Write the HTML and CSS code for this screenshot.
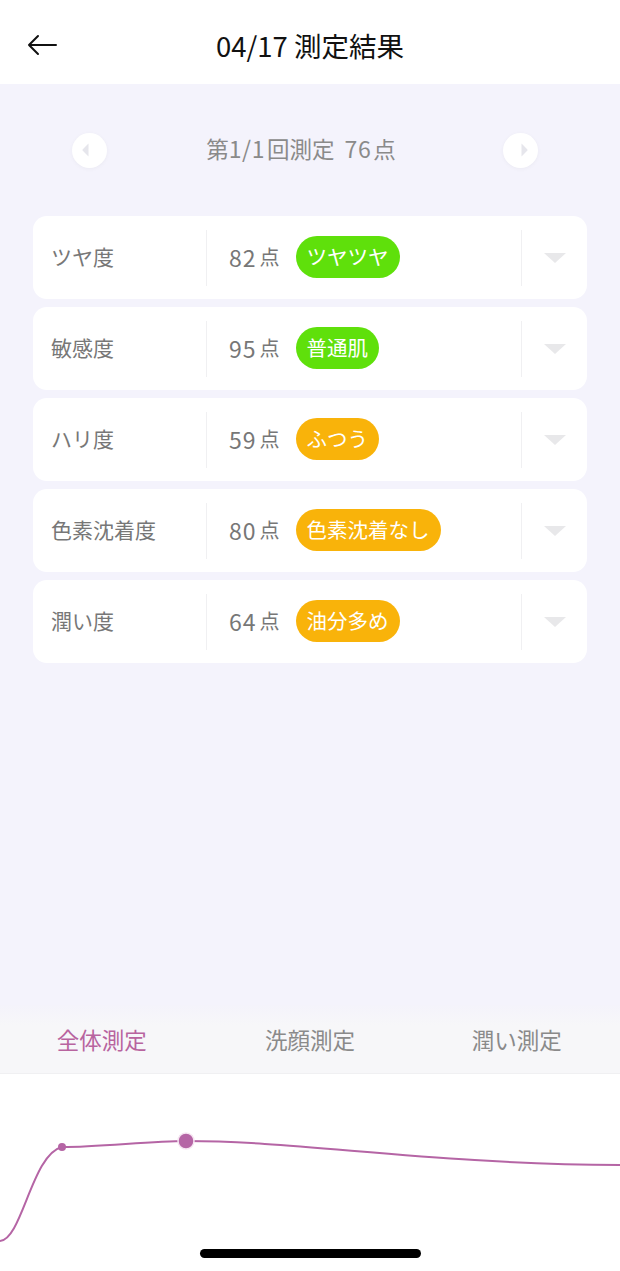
FILE: index.html
```html
<!DOCTYPE html>
<html lang="ja">
<head>
  <meta charset="UTF-8">
  <meta name="viewport" content="width=device-width, initial-scale=1.0">
  <title>測定結果</title>
  <link rel="stylesheet" href="styles.css">
</head>
<body>

  <header class="topbar">
    <span class="back">
      <svg width="30" height="22" viewBox="0 0 30 22">
        <path d="M29 11 H2 M11 2 L2 11 L11 20" fill="none" stroke="#111" stroke-width="2" stroke-linecap="round" stroke-linejoin="round"/>
      </svg>
    </span>
    <h1 class="title">04/17 測定結果</h1>
    <span></span>
  </header>

  <main class="content">
    <div class="pager">
      <span class="pager-btn prev">
        <svg width="7" height="14" viewBox="0 0 7 14"><path d="M6.5 0.5 L0.8 6.2 Q0 7 0.8 7.8 L6.5 13.5 Z" fill="#e6e6ec"/></svg>
      </span>
      <p class="pager-text">第<span class="num">1/1</span>回測定&nbsp;&nbsp;<span class="num">76</span>点</p>
      <span class="pager-btn next">
        <svg width="7" height="14" viewBox="0 0 7 14"><path d="M0.5 0.5 L6.2 6.2 Q7 7 6.2 7.8 L0.5 13.5 Z" fill="#e6e6ec"/></svg>
      </span>
    </div>

    <ul class="result-list">
      <li class="result">
        <span class="result-name">ツヤ度</span>
        <span class="result-score"><span class="num">82</span>点<span class="tag tag-green">ツヤツヤ</span></span>
        <span class="result-more"><i class="caret"></i></span>
      </li>
      <li class="result">
        <span class="result-name">敏感度</span>
        <span class="result-score"><span class="num">95</span>点<span class="tag tag-green">普通肌</span></span>
        <span class="result-more"><i class="caret"></i></span>
      </li>
      <li class="result">
        <span class="result-name">ハリ度</span>
        <span class="result-score"><span class="num">59</span>点<span class="tag tag-orange">ふつう</span></span>
        <span class="result-more"><i class="caret"></i></span>
      </li>
      <li class="result">
        <span class="result-name">色素沈着度</span>
        <span class="result-score"><span class="num">80</span>点<span class="tag tag-orange">色素沈着なし</span></span>
        <span class="result-more"><i class="caret"></i></span>
      </li>
      <li class="result">
        <span class="result-name">潤い度</span>
        <span class="result-score"><span class="num">64</span>点<span class="tag tag-orange">油分多め</span></span>
        <span class="result-more"><i class="caret"></i></span>
      </li>
    </ul>
  </main>

  <nav class="tabs">
    <span class="tab active">全体測定</span>
    <span class="tab">洗顔測定</span>
    <span class="tab">潤い測定</span>
  </nav>

  <section class="chart">
    <svg width="620" height="198" viewBox="0 0 620 198">
      <path d="M0 167 C 22 166, 32 80, 62 73 C 100 73, 150 67, 186 67 C 300 67, 430 90, 620 91" fill="none" stroke="#b565a5" stroke-width="2"/>
      <circle cx="62" cy="73" r="4" fill="#b565a5"/>
      <circle cx="186" cy="67" r="8" fill="#b565a5" stroke="#f6e6f2" stroke-width="1.5"/>
    </svg>
    <span class="home-bar"></span>
  </section>

</body>
</html>
```

FILE: styles.css
```css
* {
  box-sizing: border-box;
}

body {
  margin: 0;
  width: 620px;
  height: 1271px;
  display: flex;
  flex-direction: column;
  font-family: "Noto Sans CJK JP", "Noto Sans", sans-serif;
  background-color: #fff;
  overflow: hidden;
}

.topbar {
  height: 84px;
  display: grid;
  grid-template-columns: 1fr auto 1fr;
  align-items: center;
  padding: 6px 27px 0;
  background-color: #fff;
}

.back {
  display: flex;
  align-items: center;
}

.title {
  margin: 0;
  font-size: 27.5px;
  font-weight: 400;
  color: #111;
}

.content {
  flex: 1;
  background-color: #f4f3fc;
  padding-top: 48px;
}

.pager {
  height: 36px;
  display: flex;
  align-items: center;
  justify-content: space-between;
  padding: 0 82px 0 72px;
}

.pager-btn {
  width: 35px;
  height: 35px;
  border-radius: 50%;
  background-color: #fff;
  box-shadow: 0 1px 4px rgba(0, 0, 0, 0.04);
  display: flex;
  align-items: center;
  justify-content: center;
}

.pager-btn.prev svg {
  margin-right: 8px;
}

.pager-btn.next svg {
  margin-left: 8px;
}

.pager-text {
  margin: 0 8px 4px 0;
  font-size: 22.5px;
  color: #8a8a8a;
}

.pager-text .num {
  font-size: 23px;
  letter-spacing: 0.6px;
  margin-right: 2px;
}

.result-list {
  list-style: none;
  margin: 48px 33px 0;
  padding: 0;
  display: flex;
  flex-direction: column;
  gap: 8px;
}

.result {
  height: 83px;
  background-color: #fff;
  border-radius: 14px;
  display: flex;
  align-items: center;
}

.result-name {
  width: 174px;
  height: 56px;
  display: flex;
  align-items: center;
  padding: 0 0 4px 18px;
  border-right: 1px solid #f0f0f2;
  font-size: 21px;
  color: #777;
}

.result-score {
  flex: 1;
  height: 56px;
  display: flex;
  align-items: center;
  padding: 0 0 2px 22px;
  border-right: 1px solid #f0f0f2;
  font-size: 20px;
  color: #777;
}

.result-score .num {
  font-size: 23px;
  letter-spacing: 1px;
  margin-right: 3px;
}

.tag {
  margin-left: 16px;
  height: 42px;
  padding: 0 11px 2px;
  border-radius: 21px;
  display: inline-flex;
  align-items: center;
  font-size: 20.5px;
  color: #fff;
}

.tag-green {
  background-color: #5fe00b;
}

.tag-orange {
  background-color: #f9b30a;
}

.result-more {
  width: 65px;
  display: flex;
  justify-content: center;
}

.caret {
  width: 0;
  height: 0;
  border-left: 11px solid transparent;
  border-right: 11px solid transparent;
  border-top: 10px solid #e8e8ea;
}

.tabs {
  height: 68px;
  display: grid;
  grid-template-columns: repeat(3, 1fr);
  align-items: center;
  background: linear-gradient(#f4f3fb, #f7f7f9 30%);
}

.tab {
  position: relative;
  text-align: center;
  font-size: 22.5px;
  color: #8a8a8a;
}

.tab:first-child {
  margin-right: 3px;
}

.tab.active {
  color: #b8649f;
}

.tab.active::after {
  content: "";
  position: absolute;
  left: 30px;
  right: 16px;
  bottom: -30px;
  height: 12px;
  border-radius: 50%;
  background: radial-gradient(ellipse at center, rgba(226, 160, 205, 0.45), rgba(226, 160, 205, 0) 70%);
}

.chart {
  position: relative;
  height: 198px;
  background-color: #fff;
  border-top: 1px solid #f0f0f2;
}

.chart svg {
  display: block;
}

.home-bar {
  position: absolute;
  left: 200px;
  top: 175px;
  width: 221px;
  height: 9px;
  border-radius: 5px;
  background-color: #000;
}
```
